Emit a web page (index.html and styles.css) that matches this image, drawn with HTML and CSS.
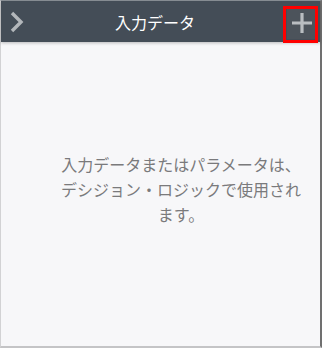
FILE: index.html
```html
<html>
<head>
	<title>入力データ</title>
	<meta name="viewport" content="initial-scale=1, maximum-scale=1">
	<link rel="stylesheet" href="styles.css">
</head>
<body>
	<section id="panel">
		<div id="header">
			<button class="back" title="戻る">
				<svg width="16" height="22" viewBox="0 0 16 22"><path d="M3 2 L12 11 L3 20" fill="none" stroke="#b3b7bb" stroke-width="3.4"/></svg>
			</button>
			<h1 id="heading">入力データ</h1>
			<button class="add" title="追加">
				<svg width="24" height="24" viewBox="0 0 24 24"><path d="M12 2 V22 M2 12 H22" fill="none" stroke="#b9bdc1" stroke-width="3.2"/></svg>
			</button>
			<div class="highlight"></div>
		</div>
		<div id="empty">
			<p>入力データまたはパラメータは、デシジョン・ロジックで使用されます。</p>
		</div>
	</section>
</body>
</html>
```

FILE: styles.css
```css
body {
	margin: 0;
	font-family: "Noto Sans CJK JP", "Noto Sans", sans-serif;
}
#panel {
	box-sizing: border-box;
	width: 322px;
	height: 348px;
	display: flex;
	flex-direction: column;
	background-color: #f7f7f9;
	border-top: 1px solid #8d9399;
	border-left: 1px solid #d2d2d4;
	border-right: 2px solid #707070;
	border-bottom: 2px solid #c4c4c6;
	position: relative;
}
#header {
	height: 41px;
	display: flex;
	align-items: center;
	background-color: #444d57;
	box-shadow: 0 1px 3px rgba(0, 0, 0, 0.25);
}
#header h1 {
	flex-grow: 1;
	margin: 0;
	text-align: center;
	font-size: 16px;
	font-weight: normal;
	color: #ffffff;
	padding-right: 6px;
}
#header button {
	border: none;
	padding: 0;
	background: transparent;
	display: flex;
	align-items: center;
	justify-content: center;
}
#header .back {
	width: 28px;
	height: 41px;
	padding-left: 4px;
}
#header .add {
	width: 29px;
	height: 31px;
	margin-right: 4px;
	margin-top: 3px;
	background-color: #4c535b;
}
.highlight {
	position: absolute;
	left: 282px;
	top: 5px;
	width: 29px;
	height: 31px;
	border: 3px solid #ff0000;
}
#empty {
	flex-grow: 1;
	display: flex;
	align-items: flex-start;
}
#empty p {
	width: 246px;
	margin: 110px 0 0 57px;
	text-align: center;
	font-size: 16px;
	line-height: 25px;
	color: #7a7a7c;
}
```
